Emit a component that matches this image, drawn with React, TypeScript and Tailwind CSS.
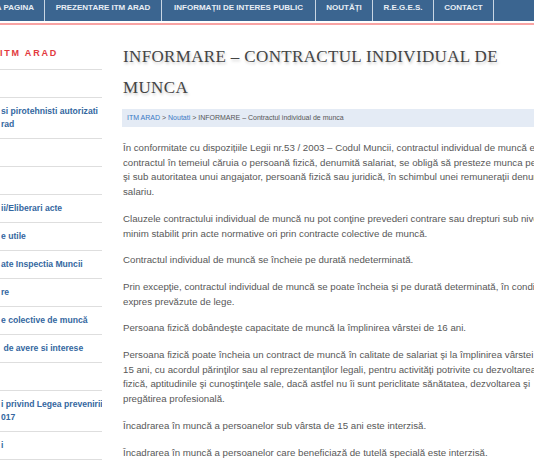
const navItems = [
  { label: "PRIMA PAGINA", width: "w-[45px]", first: true },
  { label: "PREZENTARE ITM ARAD", width: "w-[117px]" },
  { label: "INFORMAȚII DE INTERES PUBLIC", width: "w-[154px]" },
  { label: "NOUTĂȚI", width: "w-[57px]" },
  { label: "R.E.G.E.S.", width: "w-[61px]" },
  { label: "CONTACT", width: "w-[60px]" },
];

const sideLinks: string[][] = [
  ["\u00a0"],
  ["si pirotehnisti autorizati", "rad"],
  ["\u00a0"],
  ["\u00a0"],
  ["ii/Eliberari acte"],
  ["e utile"],
  ["ate Inspectia Muncii"],
  ["re"],
  ["e colective de muncă"],
  ["\u00a0de avere si interese"],
  ["\u00a0"],
  ["i privind Legea prevenirii", "017"],
  ["i"],
];

const paragraphs: string[][] = [
  [
    "În conformitate cu dispozițiile Legii nr.53 / 2003 – Codul Muncii, contractul individual de muncă este",
    "contractul în temeiul căruia o persoană fizică, denumită salariat, se obligă să presteze munca pentru",
    "şi sub autoritatea unui angajator, persoană fizică sau juridică, în schimbul unei remuneraţii denumite",
    "salariu.",
  ],
  [
    "Clauzele contractului individual de muncă nu pot conţine prevederi contrare sau drepturi sub nivelul",
    "minim stabilit prin acte normative ori prin contracte colective de muncă.",
  ],
  ["Contractul individual de muncă se încheie pe durată nedeterminată."],
  [
    "Prin excepţie, contractul individual de muncă se poate încheia şi pe durată determinată, în condiţiile",
    "expres prevăzute de lege.",
  ],
  ["Persoana fizică dobândeşte capacitate de muncă la împlinirea vârstei de 16 ani."],
  [
    "Persoana fizică poate încheia un contract de muncă în calitate de salariat şi la împlinirea vârstei de",
    "15 ani, cu acordul părinţilor sau al reprezentanţilor legali, pentru activităţi potrivite cu dezvoltarea",
    "fizică, aptitudinile şi cunoştinţele sale, dacă astfel nu îi sunt periclitate sănătatea, dezvoltarea şi",
    "pregătirea profesională.",
  ],
  ["Încadrarea în muncă a persoanelor sub vârsta de 15 ani este interzisă."],
  ["Încadrarea în muncă a persoanelor care beneficiază de tutelă specială este interzisă."],
];

export default function App() {
  return (
    <div className="relative h-[462px] w-[534px] overflow-hidden bg-white font-['Liberation_Sans',Arial,sans-serif]">
      {/* top menu */}
      <nav className="flex h-[21px] bg-[#3b6590]">
        {navItems.map((item) => (
          <div
            key={item.label}
            className={`${item.width} flex h-full shrink-0 overflow-hidden border-r border-[#c9d6e3] pt-[3px] ${
              item.first ? "justify-end pr-[10px]" : "justify-center"
            }`}
          >
            <span className="whitespace-nowrap text-[8px] font-bold leading-[10px] text-[#e8eef5]">{item.label}</span>
          </div>
        ))}
      </nav>
      <div className="mt-[2px] h-[2px] bg-[#f8a3a3]" />

      <div className="flex">
        {/* sidebar */}
        <aside className="w-[102px] shrink-0 overflow-hidden">
          <h3 className="whitespace-nowrap pb-[9px] pt-[22px] text-[9px] font-bold leading-[13px] tracking-[1.8px] text-[#e23a3e]">
            ITM ARAD
          </h3>
          <ul className="border-t border-[#dedede]">
            {sideLinks.map((lines, i) => (
              <li key={i} className="border-b border-[#dedede] py-[7px] pl-[1px]">
                {lines.map((l) => (
                  <span
                    key={l}
                    className="block whitespace-nowrap text-[8.6px] font-bold leading-[13px] text-[#3467a0]"
                  >
                    {l}
                  </span>
                ))}
              </li>
            ))}
          </ul>
        </aside>

        {/* article */}
        <main className="ml-[21px] min-w-0 flex-1">
          <h1 className="mt-[16px] font-['Liberation_Serif',serif] text-[17px] leading-[31px] tracking-[0.35px] text-[#444] [text-shadow:1px_2px_3px_rgba(0,0,0,0.22)]">
            <span className="block whitespace-nowrap">INFORMARE – CONTRACTUL INDIVIDUAL DE</span>
            <span className="block whitespace-nowrap">MUNCA</span>
          </h1>

          <div className="-ml-[1px] mt-[6px] flex h-[18px] items-center whitespace-nowrap bg-[#e4ebf5] pl-[5px] text-[7px] text-[#555]">
            <span className="text-[#3a78c4]">ITM ARAD</span>
            <span>&nbsp;&gt;&nbsp;</span>
            <span className="text-[#3a78c4]">Noutati</span>
            <span>&nbsp;&gt; INFORMARE – Contractul individual de munca</span>
          </div>

          <div className="mt-[14px] text-[9.7px] leading-[14.7px] text-[#585858]">
            {paragraphs.map((p, i) => (
              <p key={i} className="mb-[12px]">
                {p.map((line) => (
                  <span key={line} className="block whitespace-nowrap">
                    {line}
                  </span>
                ))}
              </p>
            ))}
          </div>
        </main>
      </div>
    </div>
  );
}
